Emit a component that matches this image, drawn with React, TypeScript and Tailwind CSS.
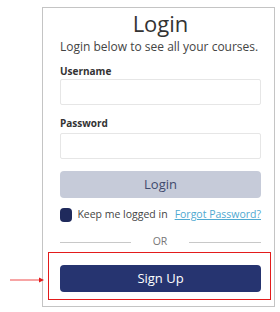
import React from "react";

export default function App() {
  const font = { fontFamily: '"Open Sans", "Noto Sans", sans-serif' };
  return (
    <div className="relative w-[280px] h-[312px] bg-white overflow-hidden" style={font}>
      <div className="relative ml-[42px] mt-[7px] w-[233px] h-[300px] border border-[#c4c4c4] bg-white pl-[17px] pr-[13px]">
        <h1 className="text-center text-[22px] leading-[30px] text-[#333333] font-normal">Login</h1>
        <p className="mt-[1px] text-[12px] leading-[16px] text-[#444444] whitespace-nowrap">
          Login below to see all your courses.
        </p>
        <label className="block mt-[9px] text-[10px] leading-[14px] font-bold text-[#333333]">Username</label>
        <div className="mt-[1px] h-[26px] border border-[#e6e6e6] rounded-[2px] bg-white" />
        <label className="block mt-[11px] text-[10px] leading-[14px] font-bold text-[#333333]">Password</label>
        <div className="mt-[3px] h-[26px] border border-[#e6e6e6] rounded-[2px] bg-white" />
        <div className="mt-[12px] h-[27px] rounded-[4px] bg-[#c6cbd9] flex items-center justify-center text-[13px] text-[#3f4a6d]">
          Login
        </div>
        <div className="mt-[10px] flex items-center h-[14px]">
          <div className="w-[14px] h-[14px] rounded-[4px] bg-[#1f2a5c]" />
          <span className="ml-[5px] text-[10.5px] text-[#444444] whitespace-nowrap">Keep me logged in</span>
          <span className="ml-[7px] text-[10.5px] text-[#4fa9d1] underline whitespace-nowrap">Forgot Password?</span>
        </div>
        <div className="mt-[14px] flex items-center h-[12px]">
          <div className="w-[71px] h-px bg-[#c8c8c8]" />
          <span className="flex-1 text-center text-[10.5px] text-[#777777]">OR</span>
          <div className="w-[72px] h-px bg-[#c8c8c8]" />
        </div>
        <div className="mt-[17px] h-[27px] rounded-[4px] bg-[#263470] flex items-center justify-center text-[13px] text-white">
          Sign Up
        </div>
        <div className="absolute left-[5px] top-[244px] w-[223px] h-[48px] border border-[#e31b1b]" />
      </div>
      <svg className="absolute left-[9px] top-[276px]" width="36" height="8" viewBox="0 0 36 8">
        <line x1="1" y1="4" x2="31" y2="4" stroke="#ef4b4b" strokeWidth="1" />
        <polygon points="30,1.5 35,4 30,6.5" fill="#e31b1b" />
      </svg>
    </div>
  );
}
